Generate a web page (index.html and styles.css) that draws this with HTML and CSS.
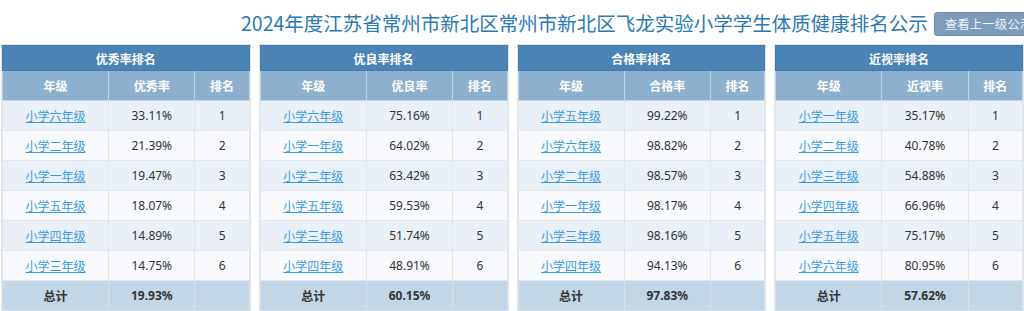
FILE: index.html
```html
<!DOCTYPE html>
<html lang="zh-CN">
<head>
<meta charset="utf-8">
<title>体质健康排名公示</title>
<link rel="stylesheet" href="styles.css">
</head>
<body>
<header class="top">
  <h1 class="title">2024年度江苏省常州市新北区常州市新北区飞龙实验小学学生体质健康排名公示</h1>
  <button class="up-btn">查看上一级公示</button>
</header>
<main class="boards">
  <table class="rank">
    <colgroup><col class="c1"><col class="c2"><col class="c3"></colgroup>
    <thead>
      <tr><th colspan="3" class="cap">优秀率排名</th></tr>
      <tr class="colhead"><th>年级</th><th>优秀率</th><th>排名</th></tr>
    </thead>
    <tbody>
      <tr><td><a href="#">小学六年级</a></td><td>33.11%</td><td>1</td></tr>
      <tr><td><a href="#">小学二年级</a></td><td>21.39%</td><td>2</td></tr>
      <tr><td><a href="#">小学一年级</a></td><td>19.47%</td><td>3</td></tr>
      <tr><td><a href="#">小学五年级</a></td><td>18.07%</td><td>4</td></tr>
      <tr><td><a href="#">小学四年级</a></td><td>14.89%</td><td>5</td></tr>
      <tr><td><a href="#">小学三年级</a></td><td>14.75%</td><td>6</td></tr>
      <tr class="total"><td>总计</td><td>19.93%</td><td></td></tr>
    </tbody>
  </table>
  <table class="rank">
    <colgroup><col class="c1"><col class="c2"><col class="c3"></colgroup>
    <thead>
      <tr><th colspan="3" class="cap">优良率排名</th></tr>
      <tr class="colhead"><th>年级</th><th>优良率</th><th>排名</th></tr>
    </thead>
    <tbody>
      <tr><td><a href="#">小学六年级</a></td><td>75.16%</td><td>1</td></tr>
      <tr><td><a href="#">小学一年级</a></td><td>64.02%</td><td>2</td></tr>
      <tr><td><a href="#">小学二年级</a></td><td>63.42%</td><td>3</td></tr>
      <tr><td><a href="#">小学五年级</a></td><td>59.53%</td><td>4</td></tr>
      <tr><td><a href="#">小学三年级</a></td><td>51.74%</td><td>5</td></tr>
      <tr><td><a href="#">小学四年级</a></td><td>48.91%</td><td>6</td></tr>
      <tr class="total"><td>总计</td><td>60.15%</td><td></td></tr>
    </tbody>
  </table>
  <table class="rank">
    <colgroup><col class="c1"><col class="c2"><col class="c3"></colgroup>
    <thead>
      <tr><th colspan="3" class="cap">合格率排名</th></tr>
      <tr class="colhead"><th>年级</th><th>合格率</th><th>排名</th></tr>
    </thead>
    <tbody>
      <tr><td><a href="#">小学五年级</a></td><td>99.22%</td><td>1</td></tr>
      <tr><td><a href="#">小学六年级</a></td><td>98.82%</td><td>2</td></tr>
      <tr><td><a href="#">小学二年级</a></td><td>98.57%</td><td>3</td></tr>
      <tr><td><a href="#">小学一年级</a></td><td>98.17%</td><td>4</td></tr>
      <tr><td><a href="#">小学三年级</a></td><td>98.16%</td><td>5</td></tr>
      <tr><td><a href="#">小学四年级</a></td><td>94.13%</td><td>6</td></tr>
      <tr class="total"><td>总计</td><td>97.83%</td><td></td></tr>
    </tbody>
  </table>
  <table class="rank">
    <colgroup><col class="c1"><col class="c2"><col class="c3"></colgroup>
    <thead>
      <tr><th colspan="3" class="cap">近视率排名</th></tr>
      <tr class="colhead"><th>年级</th><th>近视率</th><th>排名</th></tr>
    </thead>
    <tbody>
      <tr><td><a href="#">小学一年级</a></td><td>35.17%</td><td>1</td></tr>
      <tr><td><a href="#">小学二年级</a></td><td>40.78%</td><td>2</td></tr>
      <tr><td><a href="#">小学三年级</a></td><td>54.88%</td><td>3</td></tr>
      <tr><td><a href="#">小学四年级</a></td><td>66.96%</td><td>4</td></tr>
      <tr><td><a href="#">小学五年级</a></td><td>75.17%</td><td>5</td></tr>
      <tr><td><a href="#">小学六年级</a></td><td>80.95%</td><td>6</td></tr>
      <tr class="total"><td>总计</td><td>57.62%</td><td></td></tr>
    </tbody>
  </table>
</main>
</body>
</html>
```

FILE: styles.css
```css
* { box-sizing: border-box; }
html, body { margin: 0; padding: 0; background: #fff; }
body {
  font-family: "Noto Sans", "Noto Sans CJK SC", sans-serif;
  color: #333;
  overflow: hidden;
  width: 1024px;
}
.top {
  display: flex;
  align-items: center;
  gap: 6px;
  height: 45px;
  padding-left: 241px;
  white-space: nowrap;
}
.title {
  margin: 0;
  font-size: 19.5px;
  font-weight: 400;
  color: #2b79b5;
  font-family: "Noto Sans CJK SC", sans-serif;
  line-height: 24px;
}
.up-btn {
  flex: none;
  height: 24px;
  margin-top: 2px;
  padding: 0 10px;
  border: 1px solid #6f90ad;
  border-radius: 3px;
  background: #7d9cb9;
  color: #eef3f8;
  font-family: "Noto Sans CJK SC", sans-serif;
  font-size: 12.5px;
  line-height: 22px;
}
.boards {
  display: grid;
  grid-template-columns: repeat(4, 1fr);
  gap: 10px;
  padding: 0 1px 0 2px;
}
.rank {
  width: 100%;
  border-collapse: collapse;
  table-layout: fixed;
  font-size: 12px;
  box-shadow: 0 0 0 1px #e2e5e9;
}
.c1 { width: 43%; }
.c2 { width: 35%; }
.c3 { width: 22%; }
.rank th, .rank td {
  text-align: center;
  padding: 0;
  font-family: "Noto Sans CJK SC", sans-serif;
}
.rank .cap {
  height: 25px;
  background: #4a83b5;
  color: #fff;
  font-weight: 700;
  font-size: 12px;
  border: 1px solid #4579a8;
}
.colhead th {
  height: 30px;
  background: #8db0cf;
  color: #fff;
  font-weight: 700;
  font-size: 12px;
  border: 1px solid #c4d4e3;
  border-top: 1px solid #d7e2ed;
}
.rank td {
  height: 30px;
  border: 1px solid #e2e6eb;
  color: #333;
  font-size: 12px;
  font-family: "Noto Sans", "Noto Sans CJK SC", sans-serif;
}
.rank tbody tr:nth-child(odd) td { background: #eaf0f7; }
.rank tbody tr:nth-child(even) td { background: #f8fafd; }
.rank tbody tr.total td {
  background: #c3d6e6;
  font-weight: 700;
  color: #333;
  border-color: #d8e1ea;
}
.rank a {
  color: #3a9be2;
  text-decoration: underline;
  font-family: "Noto Sans CJK SC", sans-serif;
}
```
